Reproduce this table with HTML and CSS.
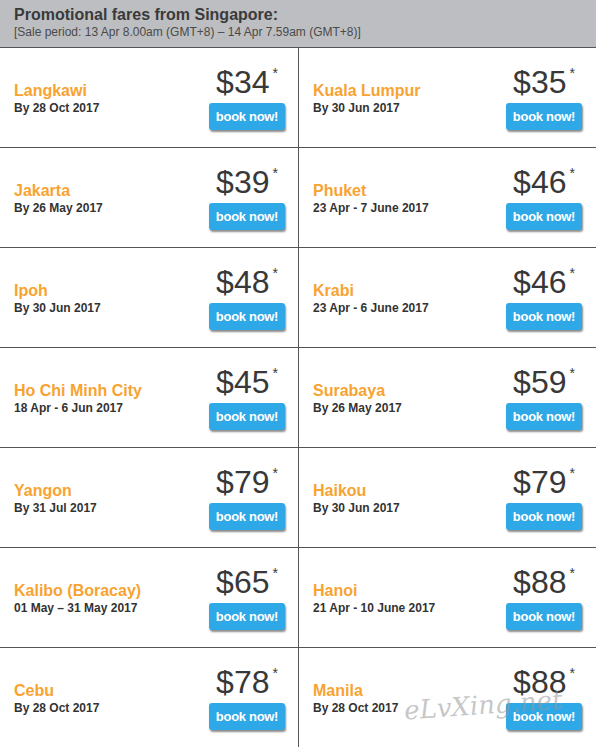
FILE: index.html
```html
<!DOCTYPE html>
<html>
<head>
<meta charset="utf-8">
<link rel="stylesheet" href="styles.css">
</head>
<body>
<div class="page">
  <header class="head">
    <h1 class="title">Promotional fares from Singapore:</h1>
    <p class="period">[Sale period: 13 Apr 8.00am (GMT+8) – 14 Apr 7.59am (GMT+8)]</p>
  </header>
  <div class="grid">
    <div class="cell"><div class="info"><div class="city">Langkawi</div><div class="date">By 28 Oct 2017</div></div><div class="buy"><div class="price">$34<span class="ast">*</span></div><a class="btn">book now!</a></div></div>
    <div class="cell"><div class="info"><div class="city">Kuala Lumpur</div><div class="date">By 30 Jun 2017</div></div><div class="buy"><div class="price">$35<span class="ast">*</span></div><a class="btn">book now!</a></div></div>
    <div class="cell"><div class="info"><div class="city">Jakarta</div><div class="date">By 26 May 2017</div></div><div class="buy"><div class="price">$39<span class="ast">*</span></div><a class="btn">book now!</a></div></div>
    <div class="cell"><div class="info"><div class="city">Phuket</div><div class="date">23 Apr - 7 June 2017</div></div><div class="buy"><div class="price">$46<span class="ast">*</span></div><a class="btn">book now!</a></div></div>
    <div class="cell"><div class="info"><div class="city">Ipoh</div><div class="date">By 30 Jun 2017</div></div><div class="buy"><div class="price">$48<span class="ast">*</span></div><a class="btn">book now!</a></div></div>
    <div class="cell"><div class="info"><div class="city">Krabi</div><div class="date">23 Apr - 6 June 2017</div></div><div class="buy"><div class="price">$46<span class="ast">*</span></div><a class="btn">book now!</a></div></div>
    <div class="cell"><div class="info"><div class="city">Ho Chi Minh City</div><div class="date">18 Apr - 6 Jun 2017</div></div><div class="buy"><div class="price">$45<span class="ast">*</span></div><a class="btn">book now!</a></div></div>
    <div class="cell"><div class="info"><div class="city">Surabaya</div><div class="date">By 26 May 2017</div></div><div class="buy"><div class="price">$59<span class="ast">*</span></div><a class="btn">book now!</a></div></div>
    <div class="cell"><div class="info"><div class="city">Yangon</div><div class="date">By 31 Jul 2017</div></div><div class="buy"><div class="price">$79<span class="ast">*</span></div><a class="btn">book now!</a></div></div>
    <div class="cell"><div class="info"><div class="city">Haikou</div><div class="date">By 30 Jun 2017</div></div><div class="buy"><div class="price">$79<span class="ast">*</span></div><a class="btn">book now!</a></div></div>
    <div class="cell"><div class="info"><div class="city">Kalibo (Boracay)</div><div class="date">01 May – 31 May 2017</div></div><div class="buy"><div class="price">$65<span class="ast">*</span></div><a class="btn">book now!</a></div></div>
    <div class="cell"><div class="info"><div class="city">Hanoi</div><div class="date">21 Apr - 10 June 2017</div></div><div class="buy"><div class="price">$88<span class="ast">*</span></div><a class="btn">book now!</a></div></div>
    <div class="cell"><div class="info"><div class="city">Cebu</div><div class="date">By 28 Oct 2017</div></div><div class="buy"><div class="price">$78<span class="ast">*</span></div><a class="btn">book now!</a></div></div>
    <div class="cell"><div class="info"><div class="city">Manila</div><div class="date">By 28 Oct 2017</div></div><div class="buy"><div class="price">$88<span class="ast">*</span></div><a class="btn">book now!</a></div></div>
  </div>
  <div class="watermark">eLvXing.net</div>
</div>
</body>
</html>
```
FILE: styles.css
```css
html, body {
  margin: 0;
  padding: 0;
  background: #fff;
}
.page {
  position: relative;
  width: 596px;
  height: 747px;
  overflow: hidden;
  font-family: "Liberation Sans", Arial, sans-serif;
}
.head {
  height: 47px;
  box-sizing: border-box;
  background: #bdbec1;
  padding: 6px 0 0 14px;
}
.title {
  margin: 0;
  font-size: 16px;
  line-height: 18px;
  font-weight: bold;
  color: #3a3a3a;
}
.period {
  margin: 1px 0 0 0;
  font-size: 12px;
  line-height: 14px;
  color: #4a4a4a;
}
.grid {
  display: grid;
  grid-template-columns: 299px 297px;
}
.cell {
  height: 100px;
  box-sizing: border-box;
  border-top: 1px solid #555;
  display: flex;
  align-items: center;
  justify-content: space-between;
  padding: 0 13px 0 14px;
}
.cell:nth-child(odd) {
  border-right: 1px solid #555;
}
.cell:nth-child(even) {
  padding: 0 14px 0 14px;
}
.info {
  padding-top: 2px;
}
.city {
  font-size: 16px;
  line-height: 18px;
  font-weight: bold;
  color: #f8a331;
}
.date {
  font-size: 12px;
  line-height: 16px;
  font-weight: bold;
  color: #333;
}
.buy {
  width: 76px;
  display: flex;
  flex-direction: column;
  align-items: center;
  padding-top: 1px;
}
.price {
  font-size: 32px;
  line-height: 32px;
  color: #383838;
  white-space: nowrap;
}
.ast {
  font-size: 14px;
  line-height: 14px;
  vertical-align: top;
  margin-left: 3px;
}
.btn {
  display: block;
  margin-top: 5px;
  width: 76px;
  height: 27px;
  box-sizing: border-box;
  background: #2ea8e6;
  border-radius: 3px;
  box-shadow: 1px 2px 2px rgba(0, 0, 0, 0.45);
  color: #fff;
  font-size: 13px;
  line-height: 27px;
  font-weight: bold;
  letter-spacing: -0.3px;
  text-align: center;
}
.watermark {
  position: absolute;
  left: 404px;
  top: 690px;
  font-family: "DejaVu Serif", serif;
  font-style: italic;
  font-size: 26px;
  color: rgba(150, 150, 150, 0.55);
  transform: rotate(-4deg);
  pointer-events: none;
}
```
